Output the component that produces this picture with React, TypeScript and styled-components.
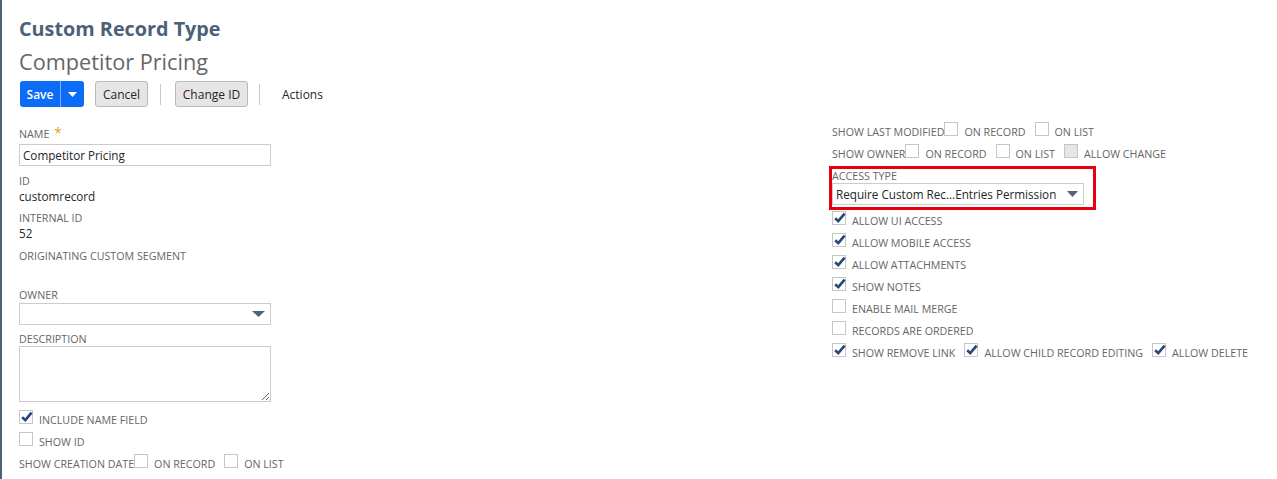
import React from 'react';
import styled, { createGlobalStyle } from 'styled-components';

const Global = createGlobalStyle`
  html, body { margin: 0; padding: 0; background: #fff; }
  body { font-family: "Open Sans", "Liberation Sans", sans-serif; }
  * { box-sizing: border-box; }
`;

const Page = styled.div`
  min-height: 479px;
  border-left: 2px solid #4d5f79;
  padding: 16px 0 0 17px;
`;

const Title = styled.h1`
  margin: 0;
  font-size: 19.8px;
  font-weight: 700;
  line-height: 26px;
  color: #4d5f79;
`;

const Subtitle = styled.div`
  margin-top: 5px;
  font-size: 21.7px;
  line-height: 30px;
  color: #666;
`;

const Toolbar = styled.div`
  margin-top: 4px;
  display: flex;
  align-items: center;
  height: 26px;
`;

const SaveGroup = styled.div`
  display: flex;
  height: 26px;
  margin-left: 1px;
  border-radius: 3px;
  overflow: hidden;
  background: #0c6cf5;
`;

const SaveButton = styled.div`
  width: 41px;
  display: flex;
  align-items: center;
  justify-content: center;
  color: #fff;
  font-size: 12px;
  font-weight: 600;
  border-right: 1px solid #7fb0fb;
`;

const SaveArrow = styled.div`
  width: 23px;
  display: flex;
  align-items: center;
  justify-content: center;
`;

const GrayButton = styled.div<{ $w: number; $ml: number }>`
  width: ${(p) => p.$w}px;
  margin-left: ${(p) => p.$ml}px;
  height: 26px;
  display: flex;
  align-items: center;
  justify-content: center;
  background: #e5e5e5;
  border: 1px solid #b9b9b9;
  border-radius: 3px;
  font-size: 12px;
  color: #262626;
`;

const Sep = styled.div<{ $ml: number }>`
  width: 1px;
  height: 21px;
  margin-left: ${(p) => p.$ml}px;
  background: #c9c9c9;
`;

const ActionsLabel = styled.div`
  margin-left: 22px;
  font-size: 12px;
  color: #262626;
`;

const Main = styled.div`
  margin-top: 14px;
  display: grid;
  grid-template-columns: 813px 1fr;
`;

const LeftCol = styled.div`
  padding-top: 5px;
  display: flex;
  flex-direction: column;
  align-items: flex-start;
`;

const RightCol = styled.div`
  display: flex;
  flex-direction: column;
  align-items: flex-start;
`;

const Label = styled.div<{ $mb?: number; $mt?: number }>`
  font-size: 10.7px;
  line-height: 14px;
  color: #666;
  text-transform: uppercase;
  margin-top: ${(p) => p.$mt ?? 0}px;
  margin-bottom: ${(p) => p.$mb ?? 0}px;
  white-space: nowrap;
`;

const Star = styled.span`
  color: #e3a21a;
  font-size: 14px;
  margin-left: 5px;
`;

const Value = styled.div<{ $mb: number }>`
  font-size: 11.7px;
  line-height: 17px;
  color: #262626;
  margin-bottom: ${(p) => p.$mb}px;
`;

const TextInput = styled.input`
  width: 252px;
  height: 22px;
  border: 1px solid #ccc;
  padding: 0 3px;
  margin: 0 0 8px 0;
  font-family: "Open Sans", "Liberation Sans", sans-serif;
  font-size: 11.7px;
  color: #262626;
  outline: none;
  background: #fff;
`;

const SelectBox = styled.div<{ $w: number; $mb?: number }>`
  width: ${(p) => p.$w}px;
  height: 22px;
  border: 1px solid #ccc;
  background: #fff;
  display: flex;
  align-items: center;
  justify-content: space-between;
  padding: 0 5px 0 3px;
  font-size: 11.7px;
  color: #262626;
  margin-bottom: ${(p) => p.$mb ?? 0}px;
  white-space: nowrap;
`;

const TextArea = styled.textarea`
  width: 252px;
  height: 56px;
  border: 1px solid #ccc;
  margin: 0;
  padding: 3px;
  resize: both;
  outline: none;
  display: block;
  font-family: "Open Sans", "Liberation Sans", sans-serif;
`;

const CheckLine = styled.div<{ $mt?: number }>`
  height: 22px;
  line-height: 22px;
  font-size: 10.7px;
  color: #666;
  text-transform: uppercase;
  white-space: nowrap;
  margin-top: ${(p) => p.$mt ?? 0}px;
`;

const BoxEl = styled.span<{ $disabled?: boolean; $mr: number; $ml?: number }>`
  display: inline-block;
  position: relative;
  width: 14px;
  height: 14px;
  border: 1px solid #c6c6c6;
  background: ${(p) => (p.$disabled ? '#e6e6e6' : '#fff')};
  margin-right: ${(p) => p.$mr}px;
  margin-left: ${(p) => p.$ml ?? 0}px;
  vertical-align: baseline;
`;

const CheckSvg = styled.svg`
  position: absolute;
  left: 0px;
  top: -1px;
`;

const Text = styled.span<{ $mr?: number }>`
  margin-right: ${(p) => p.$mr ?? 0}px;
`;

const AccessFrame = styled.div`
  margin: 1px 0 0 -3px;
  border: 3px solid #e8000d;
  padding: 0 9px 0 0;
`;

const Caret = ({ w = 12, color = '#4d6180' }: { w?: number; color?: string }) => (
  <svg width={w} height={6} viewBox="0 0 12 6" preserveAspectRatio="none">
    <path d="M0 0 H12 L6 6 Z" fill={color} />
  </svg>
);

const Box = ({ checked, disabled, mr = 6, ml }: { checked?: boolean; disabled?: boolean; mr?: number; ml?: number }) => (
  <BoxEl $disabled={disabled} $mr={mr} $ml={ml}>
    {checked && (
      <CheckSvg width="14" height="14" viewBox="0 0 14 14">
        <path d="M2.2 7.2 L5.3 10.2 L11.6 2.6" fill="none" stroke="#27467c" strokeWidth="2.6" strokeLinecap="butt" strokeLinejoin="miter" />
      </CheckSvg>
    )}
  </BoxEl>
);

export default function App() {
  return (
    <>
      <Global />
      <Page>
        <Title>Custom Record Type</Title>
        <Subtitle>Competitor Pricing</Subtitle>
        <Toolbar>
          <SaveGroup>
            <SaveButton>Save</SaveButton>
            <SaveArrow>
              <svg width="9" height="5" viewBox="0 0 9 5">
                <path d="M0 0 H9 L4.5 5 Z" fill="#fff" />
              </svg>
            </SaveArrow>
          </SaveGroup>
          <GrayButton $w={53} $ml={11}>Cancel</GrayButton>
          <Sep $ml={12} />
          <GrayButton $w={73} $ml={14}>Change ID</GrayButton>
          <Sep $ml={11} />
          <ActionsLabel>Actions</ActionsLabel>
        </Toolbar>
        <Main>
          <LeftCol>
            <Label $mb={3}>
              Name<Star>*</Star>
            </Label>
            <TextInput readOnly defaultValue="Competitor Pricing" />
            <Label>ID</Label>
            <Value $mb={6}>customrecord</Value>
            <Label>Internal ID</Label>
            <Value $mb={7}>52</Value>
            <Label $mb={25}>Originating Custom Segment</Label>
            <Label $mb={1}>Owner</Label>
            <SelectBox $w={252} $mb={7}>
              <span />
              <Caret w={13} />
            </SelectBox>
            <Label>Description</Label>
            <TextArea readOnly />
            <CheckLine $mt={7}>
              <Box checked />
              Include Name Field
            </CheckLine>
            <CheckLine>
              <Box />
              Show ID
            </CheckLine>
            <CheckLine>
              Show Creation Date
              <Box />
              <Text $mr={9}>On Record</Text>
              <Box />
              On List
            </CheckLine>
          </LeftCol>
          <RightCol>
            <CheckLine>
              Show Last Modified
              <Box />
              <Text $mr={9}>On Record</Text>
              <Box />
              On List
            </CheckLine>
            <CheckLine>
              Show Owner
              <Box />
              <Text $mr={9}>On Record</Text>
              <Box />
              <Text $mr={9}>On List</Text>
              <Box disabled />
              Allow Change
            </CheckLine>
            <AccessFrame>
              <Label>Access Type</Label>
              <SelectBox $w={252} $mb={2}>
                <span>Require Custom Rec...Entries Permission</span>
                <Caret w={11} />
              </SelectBox>
            </AccessFrame>
            <CheckLine>
              <Box checked />
              Allow UI Access
            </CheckLine>
            <CheckLine>
              <Box checked />
              Allow Mobile Access
            </CheckLine>
            <CheckLine>
              <Box checked />
              Allow Attachments
            </CheckLine>
            <CheckLine>
              <Box checked />
              Show Notes
            </CheckLine>
            <CheckLine>
              <Box />
              Enable Mail Merge
            </CheckLine>
            <CheckLine>
              <Box />
              Records Are Ordered
            </CheckLine>
            <CheckLine>
              <Box checked />
              <Text $mr={9}>Show Remove Link</Text>
              <Box checked />
              <Text $mr={9}>Allow Child Record Editing</Text>
              <Box checked />
              Allow Delete
            </CheckLine>
          </RightCol>
        </Main>
      </Page>
    </>
  );
}
